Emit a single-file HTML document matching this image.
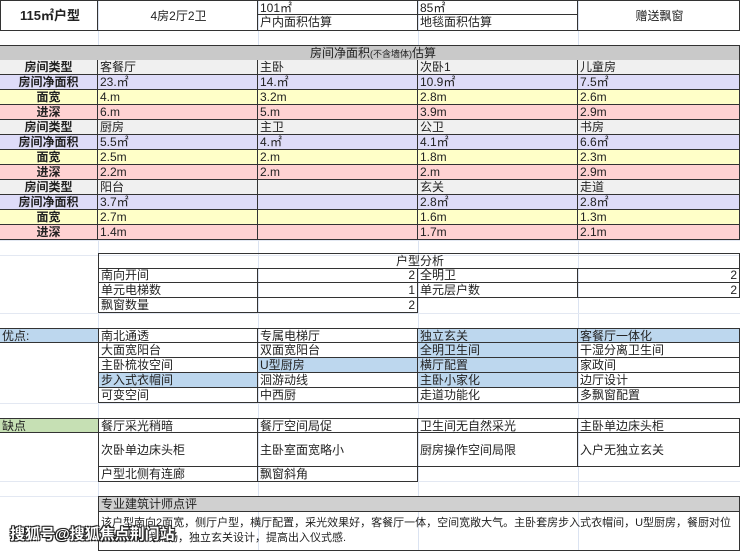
<!DOCTYPE html>
<html><head><meta charset="utf-8"><style>
body{margin:0;width:740px;height:551px;overflow:hidden;background:#fff;position:relative;font-family:"Liberation Sans","Noto Sans CJK SC",sans-serif;font-size:12px;color:#222}
.v{position:absolute;top:0;height:551px;width:1px;background:#dbe3f1}
.h{position:absolute;left:0;width:740px;height:1px;background:#e3e8f2}
.c{position:absolute;box-sizing:border-box;border-right:1px solid #333;border-bottom:1px solid #333;line-height:14px;padding-left:2px;white-space:nowrap;overflow:hidden}
.L{text-align:center;padding:0;font-weight:bold;color:#222}
.g{background:#f0f0f0}.p{background:#dedcf8}.y{background:#ffffc8}.k{background:#ffd2d2}
.b{background:#bdd7ee}.gr{background:#c6e0b4}
.r{text-align:right;padding-right:2px}
</style></head><body>
<div class="v" style="left:98px"></div><div class="v" style="left:258px"></div><div class="v" style="left:418px"></div><div class="v" style="left:578px"></div>
<div class="h" style="top:240px"></div><div class="h" style="top:255px"></div><div class="h" style="top:313px"></div><div class="h" style="top:328px"></div><div class="h" style="top:403px"></div><div class="h" style="top:418px"></div><div class="h" style="top:481px"></div><div class="h" style="top:496px"></div>

<div class="c" style="left:0;top:0;width:98px;height:31px;border-left:1px solid #333;border-top:1px solid #333;line-height:30px;text-align:center;font-weight:bold;font-size:13px">115㎡户型</div>
<div class="c" style="left:98px;top:0;width:160px;height:31px;border-top:1px solid #333;line-height:30px;text-align:center">4房2厅2卫</div>
<div class="c" style="left:258px;top:0;width:160px;height:15px;border-top:1px solid #333">101㎡</div>
<div class="c" style="left:258px;top:15px;width:160px;height:16px">户内面积估算</div>
<div class="c" style="left:418px;top:0;width:160px;height:15px;border-top:1px solid #333">85㎡</div>
<div class="c" style="left:418px;top:15px;width:160px;height:16px">地毯面积估算</div>
<div class="c" style="left:578px;top:0;width:162px;height:31px;border-top:1px solid #333;line-height:30px;text-align:center">赠送飘窗</div>

<div class="c" style="left:0;top:45px;width:740px;height:16px;background:#c9c9c9;border-top:1px solid #333;padding-left:310px">房间净面积<span style="font-size:9px">(不含墙体)</span>估算</div>

<div class="c L g" style="left:0;top:60px;width:98px;height:15px">房间类型</div><div class="c g" style="left:98px;top:60px;width:160px;height:15px">客餐厅</div><div class="c g" style="left:258px;top:60px;width:160px;height:15px">主卧</div><div class="c g" style="left:418px;top:60px;width:160px;height:15px">次卧1</div><div class="c g" style="left:578px;top:60px;width:162px;height:15px">儿童房</div>
<div class="c L p" style="left:0;top:75px;width:98px;height:15px">房间净面积</div><div class="c p" style="left:98px;top:75px;width:160px;height:15px">23.㎡</div><div class="c p" style="left:258px;top:75px;width:160px;height:15px">14.㎡</div><div class="c p" style="left:418px;top:75px;width:160px;height:15px">10.9㎡</div><div class="c p" style="left:578px;top:75px;width:162px;height:15px">7.5㎡</div>
<div class="c L y" style="left:0;top:90px;width:98px;height:15px">面宽</div><div class="c y" style="left:98px;top:90px;width:160px;height:15px">4.m</div><div class="c y" style="left:258px;top:90px;width:160px;height:15px">3.2m</div><div class="c y" style="left:418px;top:90px;width:160px;height:15px">2.8m</div><div class="c y" style="left:578px;top:90px;width:162px;height:15px">2.6m</div>
<div class="c L k" style="left:0;top:105px;width:98px;height:15px">进深</div><div class="c k" style="left:98px;top:105px;width:160px;height:15px">6.m</div><div class="c k" style="left:258px;top:105px;width:160px;height:15px">5.m</div><div class="c k" style="left:418px;top:105px;width:160px;height:15px">3.9m</div><div class="c k" style="left:578px;top:105px;width:162px;height:15px">2.9m</div>
<div class="c L g" style="left:0;top:120px;width:98px;height:15px">房间类型</div><div class="c g" style="left:98px;top:120px;width:160px;height:15px">厨房</div><div class="c g" style="left:258px;top:120px;width:160px;height:15px">主卫</div><div class="c g" style="left:418px;top:120px;width:160px;height:15px">公卫</div><div class="c g" style="left:578px;top:120px;width:162px;height:15px">书房</div>
<div class="c L p" style="left:0;top:135px;width:98px;height:15px">房间净面积</div><div class="c p" style="left:98px;top:135px;width:160px;height:15px">5.5㎡</div><div class="c p" style="left:258px;top:135px;width:160px;height:15px">4.㎡</div><div class="c p" style="left:418px;top:135px;width:160px;height:15px">4.1㎡</div><div class="c p" style="left:578px;top:135px;width:162px;height:15px">6.6㎡</div>
<div class="c L y" style="left:0;top:150px;width:98px;height:15px">面宽</div><div class="c y" style="left:98px;top:150px;width:160px;height:15px">2.5m</div><div class="c y" style="left:258px;top:150px;width:160px;height:15px">2.m</div><div class="c y" style="left:418px;top:150px;width:160px;height:15px">1.8m</div><div class="c y" style="left:578px;top:150px;width:162px;height:15px">2.3m</div>
<div class="c L k" style="left:0;top:165px;width:98px;height:15px">进深</div><div class="c k" style="left:98px;top:165px;width:160px;height:15px">2.2m</div><div class="c k" style="left:258px;top:165px;width:160px;height:15px">2.m</div><div class="c k" style="left:418px;top:165px;width:160px;height:15px">2.m</div><div class="c k" style="left:578px;top:165px;width:162px;height:15px">2.9m</div>
<div class="c L g" style="left:0;top:180px;width:98px;height:15px">房间类型</div><div class="c g" style="left:98px;top:180px;width:160px;height:15px">阳台</div><div class="c g" style="left:258px;top:180px;width:160px;height:15px"></div><div class="c g" style="left:418px;top:180px;width:160px;height:15px">玄关</div><div class="c g" style="left:578px;top:180px;width:162px;height:15px">走道</div>
<div class="c L p" style="left:0;top:195px;width:98px;height:15px">房间净面积</div><div class="c p" style="left:98px;top:195px;width:160px;height:15px">3.7㎡</div><div class="c p" style="left:258px;top:195px;width:160px;height:15px"></div><div class="c p" style="left:418px;top:195px;width:160px;height:15px">2.8㎡</div><div class="c p" style="left:578px;top:195px;width:162px;height:15px">2.8㎡</div>
<div class="c L y" style="left:0;top:210px;width:98px;height:15px">面宽</div><div class="c y" style="left:98px;top:210px;width:160px;height:15px">2.7m</div><div class="c y" style="left:258px;top:210px;width:160px;height:15px"></div><div class="c y" style="left:418px;top:210px;width:160px;height:15px">1.6m</div><div class="c y" style="left:578px;top:210px;width:162px;height:15px">1.3m</div>
<div class="c L k" style="left:0;top:225px;width:98px;height:15px">进深</div><div class="c k" style="left:98px;top:225px;width:160px;height:15px">1.4m</div><div class="c k" style="left:258px;top:225px;width:160px;height:15px"></div><div class="c k" style="left:418px;top:225px;width:160px;height:15px">1.7m</div><div class="c k" style="left:578px;top:225px;width:162px;height:15px">2.1m</div>

<div class="c" style="left:98px;top:253px;width:642px;height:16px;border-top:1px solid #333;border-left:1px solid #333;padding-left:297px">户型分析</div>
<div class="c" style="left:98px;top:268px;width:160px;height:15px;border-left:1px solid #333">南向开间</div><div class="c r" style="left:258px;top:268px;width:160px;height:15px">2</div><div class="c" style="left:418px;top:268px;width:160px;height:15px">全明卫</div><div class="c r" style="left:578px;top:268px;width:162px;height:15px">2</div>
<div class="c" style="left:98px;top:283px;width:160px;height:15px;border-left:1px solid #333">单元电梯数</div><div class="c r" style="left:258px;top:283px;width:160px;height:15px">1</div><div class="c" style="left:418px;top:283px;width:160px;height:15px">单元层户数</div><div class="c r" style="left:578px;top:283px;width:162px;height:15px">2</div>
<div class="c" style="left:98px;top:298px;width:160px;height:15px;border-left:1px solid #333">飘窗数量</div><div class="c r" style="left:258px;top:298px;width:160px;height:15px">2</div>

<div class="c b" style="left:0;top:328px;width:98px;height:15px;border-top:1px solid #333;border-right:none">优点:</div>
<div class="c" style="left:98px;top:328px;width:160px;height:15px;border-top:1px solid #333;border-left:1px solid #333">南北通透</div><div class="c" style="left:258px;top:328px;width:160px;height:15px;border-top:1px solid #333">专属电梯厅</div><div class="c b" style="left:418px;top:328px;width:160px;height:15px;border-top:1px solid #333">独立玄关</div><div class="c b" style="left:578px;top:328px;width:162px;height:15px;border-top:1px solid #333">客餐厅一体化</div>
<div class="c" style="left:98px;top:343px;width:160px;height:15px;border-left:1px solid #333">大面宽阳台</div><div class="c" style="left:258px;top:343px;width:160px;height:15px">双面宽阳台</div><div class="c b" style="left:418px;top:343px;width:160px;height:15px">全明卫生间</div><div class="c" style="left:578px;top:343px;width:162px;height:15px">干湿分离卫生间</div>
<div class="c" style="left:98px;top:358px;width:160px;height:15px;border-left:1px solid #333">主卧梳妆空间</div><div class="c b" style="left:258px;top:358px;width:160px;height:15px">U型厨房</div><div class="c b" style="left:418px;top:358px;width:160px;height:15px">横厅配置</div><div class="c" style="left:578px;top:358px;width:162px;height:15px">家政间</div>
<div class="c b" style="left:98px;top:373px;width:160px;height:15px;border-left:1px solid #333">步入式衣帽间</div><div class="c" style="left:258px;top:373px;width:160px;height:15px">洄游动线</div><div class="c b" style="left:418px;top:373px;width:160px;height:15px">主卧小家化</div><div class="c" style="left:578px;top:373px;width:162px;height:15px">边厅设计</div>
<div class="c" style="left:98px;top:388px;width:160px;height:15px;border-left:1px solid #333">可变空间</div><div class="c" style="left:258px;top:388px;width:160px;height:15px">中西厨</div><div class="c" style="left:418px;top:388px;width:160px;height:15px">走道功能化</div><div class="c" style="left:578px;top:388px;width:162px;height:15px">多飘窗配置</div>

<div class="c gr" style="left:0;top:418px;width:98px;height:15px;border-top:1px solid #333;border-right:none">缺点</div>
<div class="c" style="left:98px;top:418px;width:160px;height:15px;border-top:1px solid #333;border-left:1px solid #333">餐厅采光稍暗</div><div class="c" style="left:258px;top:418px;width:160px;height:15px;border-top:1px solid #333">餐厅空间局促</div><div class="c" style="left:418px;top:418px;width:160px;height:15px;border-top:1px solid #333">卫生间无自然采光</div><div class="c" style="left:578px;top:418px;width:162px;height:15px;border-top:1px solid #333">主卧单边床头柜</div>
<div class="c" style="left:98px;top:433px;width:160px;height:34px;border-left:1px solid #333;line-height:34px">次卧单边床头柜</div><div class="c" style="left:258px;top:433px;width:160px;height:34px;line-height:34px">主卧室面宽略小</div><div class="c" style="left:418px;top:433px;width:160px;height:34px;line-height:34px">厨房操作空间局限</div><div class="c" style="left:578px;top:433px;width:162px;height:34px;line-height:34px">入户无独立玄关</div>
<div class="c" style="left:98px;top:467px;width:160px;height:15px;border-left:1px solid #333">户型北侧有连廊</div><div class="c" style="left:258px;top:467px;width:160px;height:15px">飘窗斜角</div>

<div class="c" style="left:98px;top:496px;width:642px;height:16px;background:#d0d0d0;border-top:1px solid #333;border-left:1px solid #333">专业建筑计师点评</div>
<div class="c" style="left:98px;top:511px;width:642px;height:40px;border-left:1px solid #333;font-size:11px;line-height:15px;padding-top:5px;white-space:normal">该户型南向2面宽，侧厅户型，横厅配置，采光效果好，客餐厅一体，空间宽敞大气。主卧套房步入式衣帽间，U型厨房，餐厨对位关系，动线流畅，独立玄关设计，提高出入仪式感.</div>
<div style="position:absolute;left:10px;top:523px;font-size:15px;font-weight:bold;color:#fff;text-shadow:-1px -1px 0 #222,1px -1px 0 #222,-1px 1px 0 #222,1px 1px 0 #222,0 0 2px #000">搜狐号@搜狐焦点荆门站</div>
</body></html>
